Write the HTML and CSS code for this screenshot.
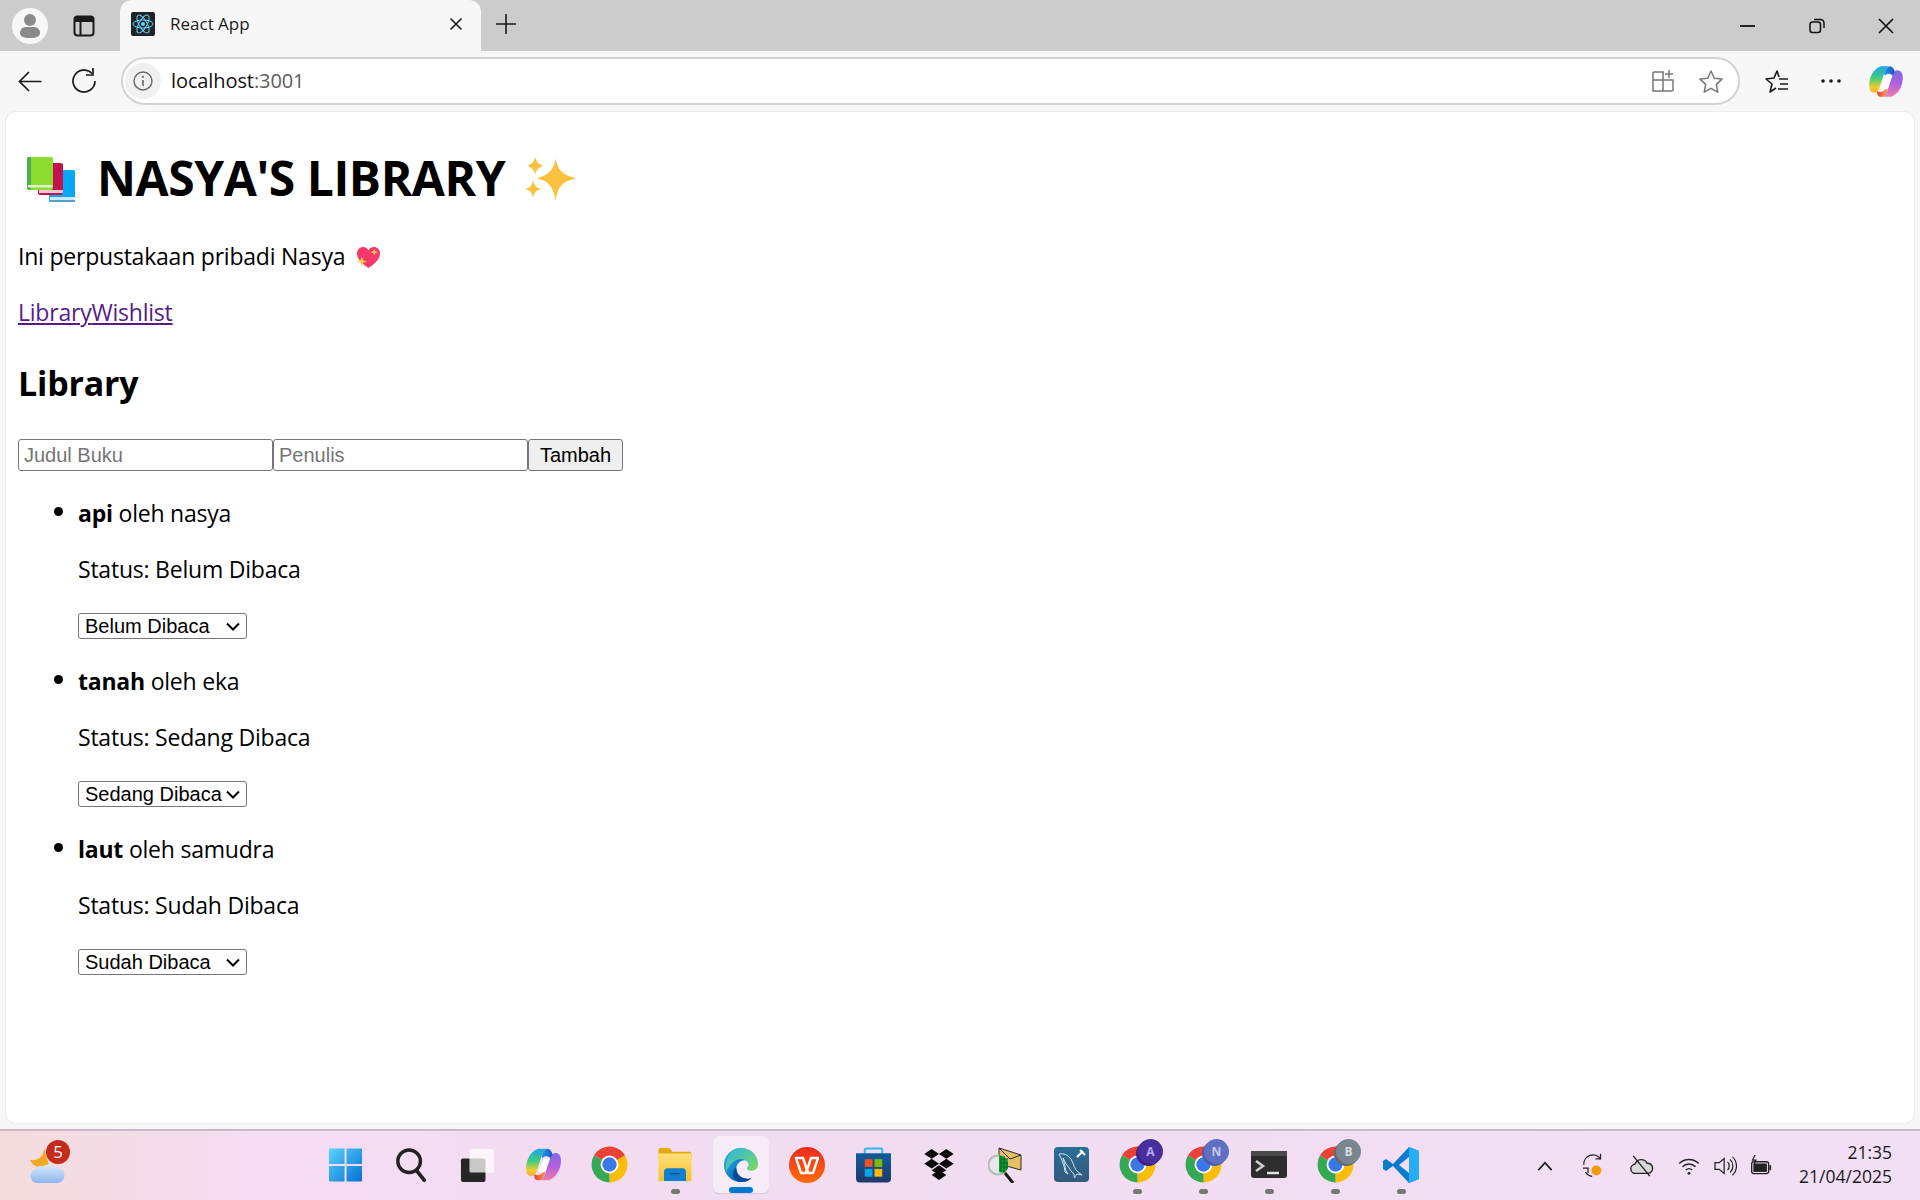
FILE: index.html
```html
<!DOCTYPE html>
<html lang="id">
<head>
<meta charset="utf-8">
<title>React App</title>
<link rel="stylesheet" href="styles.css">
</head>
<body>
<svg class="defs" width="0" height="0" aria-hidden="true">
  <defs>
    <linearGradient id="gLobeL" x1="0" y1="0" x2="0" y2="1">
      <stop offset="0" stop-color="#1aa5ea"/><stop offset=".45" stop-color="#3fcf7a"/><stop offset=".8" stop-color="#f4cf2c"/><stop offset="1" stop-color="#f7a83a"/>
    </linearGradient>
    <linearGradient id="gLobeR" x1="0" y1="0" x2="0" y2="1">
      <stop offset="0" stop-color="#7c6be8"/><stop offset=".5" stop-color="#b25fdc"/><stop offset="1" stop-color="#f07cae"/>
    </linearGradient>
    <linearGradient id="gBandT" x1="0" y1="0" x2="1" y2="0">
      <stop offset="0" stop-color="#20b8e8"/><stop offset="1" stop-color="#1a4fd0"/>
    </linearGradient>
    <linearGradient id="gBandB" x1="0" y1="0" x2="1" y2="0">
      <stop offset="0" stop-color="#e8442c"/><stop offset="1" stop-color="#f79a5c"/>
    </linearGradient>
    <linearGradient id="gWin" x1="0" y1="0" x2="1" y2="1">
      <stop offset="0" stop-color="#5ad3fb"/><stop offset="1" stop-color="#0670d4"/>
    </linearGradient>
    <linearGradient id="gEdge" x1="0" y1="0" x2="1" y2="1">
      <stop offset="0" stop-color="#32c3e6"/><stop offset=".6" stop-color="#0c72c4"/><stop offset="1" stop-color="#0b4f9e"/>
    </linearGradient>
    <linearGradient id="gEdge2" x1="0" y1="0" x2="1" y2="1">
      <stop offset="0" stop-color="#2bb4e4"/><stop offset="1" stop-color="#7fdc5a"/>
    </linearGradient>
    <linearGradient id="gCloud" x1="0" y1="0" x2="0" y2="1">
      <stop offset="0" stop-color="#dcebfb"/><stop offset="1" stop-color="#8db5ec"/>
    </linearGradient>
    <linearGradient id="gFolder" x1="0" y1="0" x2="0" y2="1">
      <stop offset="0" stop-color="#ffe27a"/><stop offset="1" stop-color="#f9bf2e"/>
    </linearGradient>
    <linearGradient id="gWps" x1="0" y1="0" x2="0" y2="1">
      <stop offset="0" stop-color="#ee2a1e"/><stop offset="1" stop-color="#ff6a08"/>
    </linearGradient>
    <linearGradient id="gStore" x1="0" y1="0" x2="0" y2="1">
      <stop offset="0" stop-color="#0e5e9e"/><stop offset="1" stop-color="#20386c"/>
    </linearGradient>
    <linearGradient id="gMysql" x1="0" y1="0" x2="0" y2="1">
      <stop offset="0" stop-color="#2a6f96"/><stop offset="1" stop-color="#33597c"/>
    </linearGradient>
    <symbol id="chromeIcon" viewBox="0 0 48 48">
      <path fill="#ea4335" d="M24 24 6.680 14A20 20 0 0 1 41.320 14Z"/>
      <path fill="#fbbc05" d="M24 24 41.320 14A20 20 0 0 1 24 44Z"/>
      <path fill="#34a853" d="M24 24 24 44A20 20 0 0 1 6.680 14Z"/>
      <circle cx="24" cy="24" r="10" fill="#fff"/>
      <circle cx="24" cy="24" r="8" fill="#3b78e7"/>
    </symbol>
    <symbol id="copilotIcon" viewBox="0 0 100 92">
      <path fill="url(#gLobeL)" d="M35 1H60C52 4 48 10 45 20L31 64C27 76 20 80 13 79 4 77 0 68 0 58 0 35 12 8 35 1Z"/>
      <path fill="url(#gLobeR)" d="M65 91H40C48 88 52 82 55 72L69 28C73 16 80 12 87 13 96 15 100 24 100 34 100 57 88 84 65 91Z"/>
      <path fill="url(#gBandT)" d="M35 1H58C68 0 74 8 76 18L69 28C64 21 52 21 47 28L44 22C48 10 52 3 62 1Z"/>
      <path fill="url(#gBandB)" d="M24 74C34 80 46 76 52 62L55 72C52 82 48 88 40 91H32C26 91 22 82 24 74Z"/>
      <path fill="#fff" d="M51 32C55 27 63 27 68 31L54 66C50 70 42 70 35 66Z"/>
    </symbol>
  </defs>
</svg>

<div class="window">
  <header class="tabstrip">
    <div class="strip-left">
      <span class="profile">
        <svg width="24" height="28" viewBox="0 0 24 28"><circle cx="12" cy="8" r="6" fill="#8a8a8a"/><path d="M2 21c0-4 3-6 6-6h8c3 0 6 2 6 6 0 3-3 5-10 5S2 24 2 21Z" fill="#8a8a8a"/></svg>
      </span>
      <span class="strip-btn">
        <svg width="22" height="22" viewBox="0 0 22 22"><rect x="1.500" y="1.500" width="19" height="19" rx="3" fill="none" stroke="#1a1a1a" stroke-width="2"/><path d="M1.500 4.500a3 3 0 0 1 3-3h13a3 3 0 0 1 3 3V7h-19Z" fill="#1a1a1a"/><path d="M7.500 7v13" stroke="#1a1a1a" stroke-width="2"/></svg>
      </span>
    </div>
    <div class="tab">
      <span class="favicon">
        <svg width="24" height="24" viewBox="0 0 24 24"><rect width="24" height="24" rx="2" fill="#20232a"/><g fill="none" stroke="#61dafb" stroke-width="1"><ellipse cx="12" cy="12" rx="10" ry="4"/><ellipse cx="12" cy="12" rx="10" ry="4" transform="rotate(60 12 12)"/><ellipse cx="12" cy="12" rx="10" ry="4" transform="rotate(120 12 12)"/></g><circle cx="12" cy="12" r="2" fill="#61dafb"/></svg>
      </span>
      <span class="tab-title">React App</span>
      <svg class="tab-close" width="14" height="14" viewBox="0 0 14 14"><path d="M1.500 1.500l11 11m0-11-11 11" stroke="#1a1a1a" stroke-width="1.600"/></svg>
    </div>
    <span class="new-tab">
      <svg width="22" height="22" viewBox="0 0 22 22"><path d="M11 1v20M1 11h20" stroke="#1a1a1a" stroke-width="1.600"/></svg>
    </span>
    <div class="win-controls">
      <span class="win-btn"><svg width="16" height="16" viewBox="0 0 16 16"><path d="M0 8h15" stroke="#111" stroke-width="1.800"/></svg></span>
      <span class="win-btn"><svg width="16" height="16" viewBox="0 0 16 16"><rect x="1" y="4" width="10.500" height="10.500" rx="2.500" fill="none" stroke="#111" stroke-width="1.500"/><path d="M5 1.500h6.500a3.500 3.500 0 0 1 3.500 3.500V10" fill="none" stroke="#111" stroke-width="1.500"/></svg></span>
      <span class="win-btn"><svg width="16" height="16" viewBox="0 0 16 16"><path d="M1 1l14 14m0-14L1 15" stroke="#111" stroke-width="1.700"/></svg></span>
    </div>
  </header>

  <nav class="toolbar">
    <span class="tool-btn">
      <svg width="24" height="21" viewBox="0 0 24 21"><path d="M23.500 10.500H1.500M11 1 1.500 10.500 11 20" fill="none" stroke="#1a1a1a" stroke-width="1.700"/></svg>
    </span>
    <span class="tool-btn">
      <svg width="26" height="26" viewBox="0 0 26 26"><path d="M21 5.500A11 11 0 1 0 24 13" fill="none" stroke="#1a1a1a" stroke-width="1.700"/><path d="M22 0v7h-7" fill="none" stroke="#1a1a1a" stroke-width="1.700"/></svg>
    </span>
    <div class="address">
      <span class="site-info">
        <svg width="20" height="20" viewBox="0 0 20 20"><circle cx="10" cy="10" r="9" fill="none" stroke="#666" stroke-width="1.400"/><path d="M10 9v6" stroke="#666" stroke-width="1.600"/><circle cx="10" cy="5.800" r="1.100" fill="#666"/></svg>
      </span>
      <span class="url">localhost<span class="url-port">:3001</span></span>
      <span class="addr-icon">
        <svg width="24" height="24" viewBox="0 0 24 24"><g fill="none" stroke="#777" stroke-width="1.500"><path d="M13 3H3a1 1 0 0 0-1 1v18h19a1 1 0 0 0 1-1V11H2M12 3v19"/><path d="M18 1v8m-4-4h8"/></g></svg>
      </span>
      <span class="addr-icon">
        <svg width="26" height="25" viewBox="0 0 26 25"><path d="M13 2l3.300 7.200 7.700.9-5.700 5.300 1.500 7.800L13 19.300l-6.800 3.900 1.500-7.800L2 10.100l7.700-.9Z" fill="none" stroke="#777" stroke-width="1.500" stroke-linejoin="round"/></svg>
      </span>
    </div>
    <span class="tool-right first">
      <svg width="26" height="25" viewBox="0 0 26 25"><path d="M16 8l-2-6-3 7-8 1 6 5-2 8 6-4" fill="none" stroke="#1a1a1a" stroke-width="1.600" stroke-linejoin="round"/><path d="M16 10h9m-8 5h8m-10 5h10" stroke="#1a1a1a" stroke-width="1.600"/></svg>
    </span>
    <span class="tool-right">
      <svg width="20" height="4" viewBox="0 0 20 4"><circle cx="2" cy="2" r="1.800" fill="#1a1a1a"/><circle cx="10" cy="2" r="1.800" fill="#1a1a1a"/><circle cx="18" cy="2" r="1.800" fill="#1a1a1a"/></svg>
    </span>
    <span class="tool-right">
      <svg width="34" height="31"><use href="#copilotIcon"/></svg>
    </span>
  </nav>

  <main class="viewport">
    <h1 class="page-title">
      <svg class="emoji-books" width="48" height="45" viewBox="0 0 48 45"><rect x="22" y="13" width="26" height="32" rx="2" fill="#03a9f4"/><rect x="23" y="40" width="25" height="3" fill="#cfe8f5"/><rect x="22" y="43" width="26" height="2" fill="#4f9fd0"/><rect x="11" y="6" width="25" height="32" rx="2" fill="#c2134e"/><rect x="12" y="33" width="24" height="3" fill="#f3c6d4"/><rect width="26" height="33" rx="2" fill="#8bdc2e"/><path d="M0 2a2 2 0 0 1 2-2h2v33H2a2 2 0 0 1-2-2Z" fill="#4caf50"/><rect x="1" y="28" width="24" height="2.500" fill="#dff2cf"/></svg>
      <span class="title-text">NASYA'S LIBRARY</span>
      <svg class="emoji-spark" width="51" height="46" viewBox="0 0 50 52" preserveAspectRatio="none"><path fill="#f9c13e" d="M30 2c2 12 6 18 20 22-14 4-18 10-20 26-2-16-6-22-18-26 12-4 16-10 18-22Z"/><path fill="#f9c13e" d="M10 0c1 5 3 8 8 10-5 2-7 5-8 10-1-5-3-8-8-10 5-2 7-5 8-10ZM8 26c1 6 3 9 8 10-5 2-7 4-8 10-1-6-3-8-8-10 5-1 7-4 8-10Z"/></svg>
    </h1>
    <p class="tagline">Ini perpustakaan pribadi Nasya
      <svg class="emoji-sm" width="25" height="23" viewBox="0 0 26 26" preserveAspectRatio="none"><path fill="#f8376c" d="M13 25C5 19 1 14 1 8c0-4 3-7 6.500-7C10 1 12 2.500 13 5c1-2.500 3-4 5.500-4C22 1 25 4 25 8c0 6-4 11-12 17Z"/><path fill="#fbd34a" d="M19 3l1 3 3 1-3 1-1 3-1-3-3-1 3-1ZM6 12l1.500 4 4 1.500-4 1.500L6 23l-1.500-4-4-1.500 4-1.500Z"/></svg>
    </p>
    <p class="nav-links"><a href="#library" class="visited">Library</a><a href="#wishlist" class="visited">Wishlist</a></p>
    <h2 class="section-title">Library</h2>
    <form class="add-form">
      <input class="field" type="text" placeholder="Judul Buku">
      <input class="field" type="text" placeholder="Penulis">
      <button class="add-btn" type="button">Tambah</button>
    </form>
    <ul class="books">
      <li>
        <p><strong>api</strong> oleh nasya</p>
        <p>Status: Belum Dibaca</p>
        <select class="status"><option selected>Belum Dibaca</option><option>Sedang Dibaca</option><option>Sudah Dibaca</option></select>
      </li>
      <li>
        <p><strong>tanah</strong> oleh eka</p>
        <p>Status: Sedang Dibaca</p>
        <select class="status"><option>Belum Dibaca</option><option selected>Sedang Dibaca</option><option>Sudah Dibaca</option></select>
      </li>
      <li>
        <p><strong>laut</strong> oleh samudra</p>
        <p>Status: Sudah Dibaca</p>
        <select class="status"><option>Belum Dibaca</option><option>Sedang Dibaca</option><option selected>Sudah Dibaca</option></select>
      </li>
    </ul>
  </main>

  <footer class="taskbar">
    <div class="weather">
      <svg width="38" height="38" viewBox="0 0 38 38"><path d="M15 2C15 10 10 15 1 14 4 21 12 24 20 19Z" fill="#f5a623"/><path d="M8 37a7 7 0 0 1-2-13.500A7 7 0 0 1 14 20a10 10 0 0 1 13 2 7.500 7.500 0 0 1 2 15Z" fill="url(#gCloud)"/></svg>
      <span class="weather-badge">5</span>
    </div>
    <div class="task-icons">
      <span class="task-cell"><svg width="35" height="36" viewBox="0 0 36 36"><path fill="url(#gWin)" d="M1 2a1 1 0 0 1 1-1h15v16H1Zm18-1h15a1 1 0 0 1 1 1v15H19ZM1 19h16v16H2a1 1 0 0 1-1-1Zm18 0h16v15a1 1 0 0 1-1 1H19Z"/></svg></span>
      <span class="task-cell"><svg width="32" height="34" viewBox="0 0 34 36"><circle cx="15" cy="14" r="12" fill="none" stroke="#222" stroke-width="3.600"/><path d="M23 24l8 10" stroke="#222" stroke-width="4" stroke-linecap="round"/></svg></span>
      <span class="task-cell"><svg width="36" height="34" viewBox="0 0 36 36"><rect x="1" y="11" width="26" height="25" rx="2" fill="#262626"/><rect x="10" y="1" width="26" height="25" rx="2" fill="#fff" fill-opacity=".75"/></svg></span>
      <span class="task-cell"><svg width="35" height="33"><use href="#copilotIcon"/></svg></span>
      <span class="task-cell"><svg width="43" height="43"><use href="#chromeIcon"/></svg></span>
      <span class="task-cell running"><svg width="36" height="33" viewBox="0 0 36 36"><path fill="#e5a80f" d="M0 2a2 2 0 0 1 2-2h10l3 4h19a2 2 0 0 1 2 2v6H0Z"/><rect y="6" width="36" height="30" fill="url(#gFolder)"/><path fill="#0f7fd0" d="M6 26a4 4 0 0 1 4-4h16a4 4 0 0 1 4 4v10H6Z"/><path d="M13 28h10" stroke="#0a4f90" stroke-width="1.500"/></svg></span>
      <span class="task-cell active"><svg width="38" height="36" viewBox="0 0 38 38"><path fill="url(#gEdge)" d="M19 1C9 1 1 9 1 19c0 10 8 18 18 18 4 0 8-1 11-4-9 3-16-2-16-10 0-5 4-9 9-9 6 0 9 3 9 3 2-8-4-16-13-16Z"/><path fill="url(#gEdge2)" d="M19 1c10 0 18 7 18 17 0 5-3 7-7 7-3 0-5-1-5-3 2-1 3-4 0-7-3-3-9-3-13 0-4 3-7 7-9 11C2 13 8 1 19 1Z"/><path fill="#0b4b96" d="M14 22c0 7 6 13 16 11-3 3-7 4-11 4-5 0-10-5-8-11 .5-2 2-4 3-4Z"/></svg></span>
      <span class="task-cell"><svg width="36" height="36" viewBox="0 0 36 36"><circle cx="18" cy="18" r="18" fill="url(#gWps)"/><path d="M7 11h7l4 12 4-12h7l-5 15h-5l-1-5-1 5h-5Z" fill="none" stroke="#fff" stroke-width="2.400" stroke-linejoin="round"/></svg></span>
      <span class="task-cell"><svg width="35" height="36" viewBox="0 0 36 36"><path d="M9 7V2.500A1.500 1.500 0 0 1 10.500 1h15A1.500 1.500 0 0 1 27 2.500V7" fill="none" stroke="#35b8ee" stroke-width="2"/><path d="M0 6h36v26a4 4 0 0 1-4 4H4a4 4 0 0 1-4-4Z" fill="url(#gStore)"/><rect x="9" y="12" width="8" height="8" fill="#f25022"/><rect x="19" y="12" width="8" height="8" fill="#7fba00"/><rect x="9" y="22" width="8" height="8" fill="#00a4ef"/><rect x="19" y="22" width="8" height="8" fill="#ffb900"/></svg></span>
      <span class="task-cell"><svg width="36" height="31" viewBox="0 0 36 38"><path fill="#0a0a0a" d="M9 0l9 6-9 6-9-6Zm18 0 9 6-9 6-9-6ZM0 18l9-6 9 6-9 6Zm36 0-9-6-9 6 9 6ZM9 26l9-6 9 6-9 6Z"/><path fill="#0a0a0a" d="M18 26l9 6-9 6-9-6Z"/></svg></span>
      <span class="task-cell"><svg width="34" height="36" viewBox="0 0 34 36"><path fill="#e6bf63" d="M11 1 33 8v15L11 17Z" stroke="#2a2a2a" stroke-width="1"/><path d="M11 1l11 11L33 8" fill="none" stroke="#2a2a2a" stroke-width="1"/><circle cx="10" cy="18" r="9.500" fill="#e9e6ea" stroke="#b8b8b8" stroke-width="2"/><path fill="#0fa02a" d="M11 8c5 1 9 5 9 10 0 3-1 6-4 8l-5-1Z"/><path d="M12 12h8M12 16h8M12 20h8M13 9v16M16 9v16M19 12v10" stroke="#063" stroke-width="1"/><path d="M17 26l8 10" stroke="#1a1a1a" stroke-width="3"/></svg></span>
      <span class="task-cell"><svg width="35" height="35" viewBox="0 0 35 35"><rect width="35" height="35" rx="4" fill="url(#gMysql)"/><path d="M5 7c5-1 9 1 12 5 3 5 3 10 7 13l4 3-5-1c-2 2-2 3-2 4-1-1-1-2-1-4-3-2-5-7-8-10L9 11c1 4 2 8 3 13l2 3-3-2-1-6-3-8Z" fill="none" stroke="#cfe0ea" stroke-width="1"/><path d="M23 10l6-6m-3-1 5 5" stroke="#fff" stroke-width="2"/></svg></span>
      <span class="task-cell running"><svg width="43" height="43"><use href="#chromeIcon"/></svg><span class="profile-badge badge-a">A</span></span>
      <span class="task-cell running"><svg width="43" height="43"><use href="#chromeIcon"/></svg><span class="profile-badge badge-n">N</span></span>
      <span class="task-cell running"><svg width="36" height="27" viewBox="0 0 36 27"><rect width="36" height="27" rx="3" fill="#2d2d2d"/><rect width="36" height="5" fill="#4a4a4a"/><path d="M5 10l7 5-7 5" fill="none" stroke="#d0d0d0" stroke-width="2.500"/><path d="M16 22h12" stroke="#e0e0e0" stroke-width="2.500"/></svg></span>
      <span class="task-cell running"><svg width="43" height="43"><use href="#chromeIcon"/></svg><span class="profile-badge badge-b">B</span></span>
      <span class="task-cell running"><svg width="36" height="36" viewBox="0 0 36 36"><path fill="#0a7ccb" d="M26 0 10 17 3 12 0 14v8l3 2 7-5 16 17 10-4V4Z"/><path fill="#24aef5" d="M26 0l10 4v28l-10 4Z"/><path fill="#f3def3" d="M26 10 16 18l10 8Z"/></svg></span>
    </div>
    <div class="tray">
      <span class="tray-icon"><svg width="16" height="10" viewBox="0 0 18 12"><path d="M1 11l8-9 8 9" fill="none" stroke="#1a1a1a" stroke-width="2"/></svg></span>
      <span class="tray-icon"><svg width="24" height="25" viewBox="0 0 28 30"><path d="M23 7A11 11 0 0 0 3 14M5 23a11 11 0 0 0 8 5" fill="none" stroke="#222" stroke-width="1.500"/><path d="M23 1v6h-6M2 18h6v6" fill="none" stroke="#222" stroke-width="1.500"/><circle cx="18" cy="21" r="6" fill="#f59a0c"/></svg></span>
      <span class="tray-icon"><svg width="25" height="24" viewBox="0 0 26 26"><path d="M7 21a5 5 0 0 1-1-10 7 7 0 0 1 13-1 5.500 5.500 0 0 1 1 11Z" fill="#d8d8d8" stroke="#222" stroke-width="1.500"/><path d="M4 2l18 22" stroke="#222" stroke-width="1.500"/></svg></span>
      <span class="tray-icon"><svg width="24" height="18" viewBox="0 0 26 22"><path d="M1 8a17 17 0 0 1 24 0M5 12a11 11 0 0 1 16 0M9 16a5.500 5.500 0 0 1 8 0" fill="none" stroke="#222" stroke-width="1.600"/><circle cx="13" cy="20" r="1.800" fill="#222"/></svg></span>
      <span class="tray-icon"><svg width="24" height="20" viewBox="0 0 26 24"><path d="M1 8h5l6-5v18l-6-5H1Z" fill="none" stroke="#222" stroke-width="1.500"/><path d="M16 7a7 7 0 0 1 0 10m3-13a11 11 0 0 1 0 16m3-19a15 15 0 0 1 0 22" fill="none" stroke="#222" stroke-width="1.500"/></svg></span>
      <span class="tray-icon"><svg width="24" height="22" viewBox="0 0 26 26"><rect x="2" y="8" width="20" height="14" rx="2.500" fill="none" stroke="#222" stroke-width="1.600"/><rect x="4" y="10" width="16" height="10" fill="#222"/><path d="M23 12h2v6h-2Z" fill="#222"/><path d="M6 0 3 6h4l-2 5" fill="none" stroke="#222" stroke-width="1.500"/></svg></span>
    </div>
    <div class="clock"><span>21:35</span><span>21/04/2025</span></div>
  </footer>
</div>
</body>
</html>
```

FILE: styles.css
```css
html, body { margin: 0; padding: 0; height: 100%; }
body { background: #f7f7f7; overflow: hidden; }
.defs { display: block; width: 0; height: 0; }
.window { display: flex; flex-direction: column; width: 1920px; height: 1200px; font-family: "Open Sans", "Noto Sans", sans-serif; color: #000; }

/* tab strip */
.tabstrip { display: flex; align-items: flex-end; height: 51px; background: #cccccc; flex: none; }
.strip-left { display: flex; align-items: center; width: 120px; height: 51px; flex: none; }
.profile { display: flex; align-items: center; justify-content: center; width: 36px; height: 36px; margin-left: 12px; border-radius: 50%; background: #f7f7f7; }
.strip-btn { display: flex; align-items: center; justify-content: center; width: 36px; height: 36px; margin-left: 18px; }
.tab { display: flex; align-items: center; width: 361px; height: 51px; padding: 0 18px 3px 11px; box-sizing: border-box; background: #f7f7f7; border-radius: 12px 12px 0 0; flex: none; }
.favicon { display: flex; width: 24px; height: 24px; }
.tab-title { margin-left: 15px; flex: 1; font-size: 17px; line-height: 24px; color: #1a1a1a; }
.tab-close { flex: none; }
.new-tab { display: flex; align-items: center; margin-left: 14px; height: 51px; padding-bottom: 4px; box-sizing: border-box; }
.win-controls { display: flex; margin-left: auto; height: 51px; align-items: center; }
.win-btn { display: flex; align-items: center; justify-content: center; width: 69px; height: 51px; }

/* toolbar */
.toolbar { display: flex; align-items: center; height: 60px; background: #f7f7f7; flex: none; }
.tool-btn { display: flex; align-items: center; justify-content: center; width: 54px; height: 48px; flex: none; }
.toolbar .tool-btn:first-child { margin-left: 3px; }
.address { display: flex; align-items: center; width: 1619px; height: 48px; box-sizing: border-box; margin-left: 10px; border: 2px solid #d2d2d2; border-radius: 24px; background: #fff; flex: none; }
.site-info { display: flex; align-items: center; justify-content: center; width: 36px; height: 36px; margin-left: 2px; border-radius: 50%; background: #f0f0f0; flex: none; }
.url { margin-left: 10px; flex: 1; font-size: 20px; line-height: 28px; letter-spacing: -.1px; color: #111; }
.url-port { color: #5c5c5c; }
.addr-icon { display: flex; align-items: center; justify-content: center; width: 48px; height: 40px; flex: none; }
.addr-icon:last-child { margin-right: 3px; }
.tool-right { display: flex; align-items: center; justify-content: center; width: 55px; height: 48px; flex: none; }
.tool-right.first { margin-left: 8px; }

/* page */
.viewport { flex: 1; min-height: 0; margin: 1px 6px 6px; padding: 1px 12px 0; background: #fff; border-radius: 10px; box-shadow: 0 0 0 1px #ececec; font-size: 23px; line-height: 32px; letter-spacing: -.22px; overflow: hidden; }
.page-title { display: flex; align-items: center; margin: 33px 0 30px; font-size: 48px; line-height: 64px; font-weight: 700; letter-spacing: 0; }
.emoji-books { flex: none; margin: 3px 0 0 9px; }
.emoji-spark { flex: none; margin-top: 3px; }
.title-text { margin: 0 20px 0 22px; letter-spacing: -.45px; }
.tagline { margin: 30px 0 24px; }
.emoji-sm { vertical-align: -4px; margin-left: 5px; }
.nav-links { margin: 24px 0; }
.visited { color: #551a8b; text-decoration: underline; }
.section-title { margin: 31px 0 32px; font-size: 34px; line-height: 48px; font-weight: 700; letter-spacing: -.2px; }
.add-form { display: flex; height: 32px; margin: 0; }
.field { width: 255px; height: 32px; box-sizing: border-box; margin: 0; padding: 1px 5px; border: 1.500px solid #767676; border-radius: 3px; background: #fff; font-family: "Liberation Sans", Arial, sans-serif; font-size: 20px; letter-spacing: 0; }
.field::placeholder { color: #757575; }
.add-btn { width: 95px; height: 32px; box-sizing: border-box; margin: 0; padding: 0; border: 1.500px solid #767676; border-radius: 3px; background: #efefef; color: #000; font-family: "Liberation Sans", Arial, sans-serif; font-size: 20px; letter-spacing: 0; }
.books { margin: 26px 0 24px; padding: 0 0 0 60px; list-style: none; }
.books p { margin: 0 0 24px; }
.books li { position: relative; margin: 0; }
.books li::before { content: ""; position: absolute; left: -24px; top: 10px; width: 9px; height: 9px; border-radius: 50%; background: #000; }
.status { display: block; appearance: none; width: 169px; height: 26px; box-sizing: border-box; margin: 28px 0 26px; padding: 0 0 0 6px; border: 1.500px solid #767676; border-radius: 3px; background: #fff url("data:image/svg+xml,%3Csvg xmlns='http://www.w3.org/2000/svg' width='14' height='9' viewBox='0 0 14 9'%3E%3Cpath d='M1 1.500l6 6 6-6' fill='none' stroke='%23000' stroke-width='2'/%3E%3C/svg%3E") no-repeat right 6px center; color: #000; font-family: "Liberation Sans", Arial, sans-serif; font-size: 20px; letter-spacing: 0; }

/* taskbar */
.taskbar { display: flex; align-items: center; height: 71px; box-sizing: border-box; border-top: 2px solid #c9b8c9; background: linear-gradient(90deg, #f4dcdc 0, #f5dcf3 14%, #f1dcf0 45%, #f3dff5 100%); flex: none; }
.weather { position: relative; display: flex; width: 38px; height: 38px; margin: 0 0 1px 29px; flex: none; }
.weather-badge { position: absolute; left: 17px; top: -6px; width: 24px; height: 24px; border-radius: 50%; background: #c42b1c; color: #fff; font-size: 17px; line-height: 24px; text-align: center; }
.task-icons { display: flex; margin-left: 245px; flex: none; }
.task-cell { position: relative; display: flex; align-items: center; justify-content: center; width: 66px; height: 69px; box-sizing: border-box; padding-bottom: 2px; flex: none; }
.task-cell.running::after { content: ""; position: absolute; left: 29px; bottom: 6px; width: 9px; height: 5px; border-radius: 3px; background: #777; }
.task-cell.active::before { content: ""; position: absolute; left: 5px; top: 5px; width: 56px; height: 57px; border-radius: 6px; background: #f7ebf7; box-shadow: 0 1px 1px #d8c8d8; z-index: 0; }
.task-cell.active::after { content: ""; position: absolute; left: 21px; top: 56px; width: 24px; height: 6px; border-radius: 3px; background: #0078d4; }
.task-cell.active svg { position: relative; z-index: 1; }
.profile-badge { position: absolute; left: 34px; top: 8px; width: 25px; height: 25px; border-radius: 50%; font-size: 12px; font-weight: 700; line-height: 25px; text-align: center; }
.badge-a { background: #4b2e9e; color: #b9a8ec; box-shadow: -2px 2px 0 #3a2480; }
.badge-n { background: #5f6fc4; color: #c3caef; box-shadow: -2px 2px 0 #4d5ba8; }
.badge-b { background: #79868d; color: #d7dde0; box-shadow: -2px 2px 0 #5e6a70; }
.tray { display: flex; align-items: center; margin-left: 96px; flex: none; }
.tray-icon { display: flex; align-items: center; justify-content: center; width: 36px; height: 40px; flex: none; }
.tray-icon:nth-child(1) { width: 30px; }
.tray-icon:nth-child(2) { width: 60px; margin-left: 3px; }
.tray-icon:nth-child(4) { margin-left: 12px; }
.clock { display: flex; flex-direction: column; align-items: flex-end; margin: 0 28px 4px auto; font-size: 17.500px; line-height: 24px; color: #1a1a1a; }
```
